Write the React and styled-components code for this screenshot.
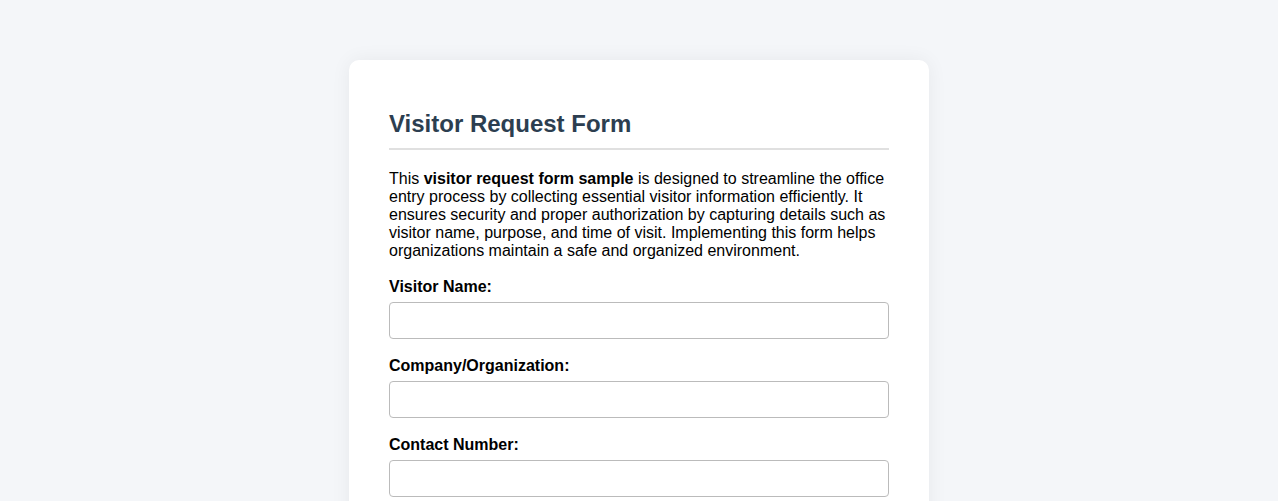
import React from "react";
import styled, { createGlobalStyle } from "styled-components";

const GlobalStyle = createGlobalStyle`
    body {
        margin: 0;
        background: #f4f6f9;
        font-family: "Liberation Sans", Arial, sans-serif;
        color: #000;
    }
`;

const Page = styled.div`
    padding-top: 60px;
    display: flex;
    justify-content: center;
`;

const Card = styled.form`
    width: 500px;
    padding: 50px 40px 40px;
    background: #fff;
    border-radius: 10px;
    box-shadow: 0 0 20px rgba(0, 0, 0, 0.06);
`;

const Title = styled.h2`
    margin: 0 0 20px;
    padding-bottom: 10px;
    border-bottom: 2px solid #e0e0e0;
    font-size: 24px;
    line-height: 28px;
    font-weight: bold;
    color: #2c3e50;
`;

const Intro = styled.p`
    margin: 0 0 18px;
    font-size: 16px;
    line-height: 18px;
`;

const Field = styled.div`
    margin-bottom: 18px;
`;

const Label = styled.label`
    display: block;
    margin-bottom: 6px;
    font-size: 16px;
    line-height: 18px;
    font-weight: bold;
`;

const Input = styled.input`
    display: block;
    box-sizing: border-box;
    width: 100%;
    height: 37px;
    padding: 10px;
    border: 1px solid #bbb;
    border-radius: 4px;
    font-family: inherit;
    font-size: 16px;
`;

const fields = [
    { id: "visitorName", label: "Visitor Name:" },
    { id: "company", label: "Company/Organization:" },
    { id: "contact", label: "Contact Number:" },
];

export default function App() {
    return (
        <>
            <GlobalStyle />
            <Page>
                <Card>
                    <Title>Visitor Request Form</Title>
                    <Intro>
                        This <strong>visitor request form sample</strong> is designed to streamline the office
                        entry process by collecting essential visitor information efficiently. It ensures
                        security and proper authorization by capturing details such as visitor name, purpose,
                        and time of visit. Implementing this form helps organizations maintain a safe and
                        organized environment.
                    </Intro>
                    {fields.map((f) => (
                        <Field key={f.id}>
                            <Label htmlFor={f.id}>{f.label}</Label>
                            <Input id={f.id} type="text" />
                        </Field>
                    ))}
                </Card>
            </Page>
        </>
    );
}
